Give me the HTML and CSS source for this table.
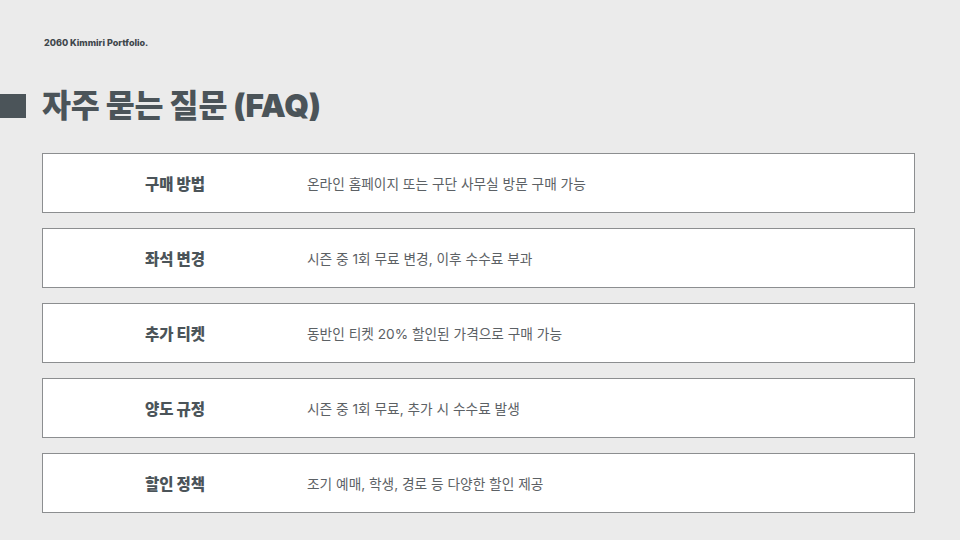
FILE: index.html
```html
<!DOCTYPE html>
<html lang="ko">
<head>
<meta charset="utf-8">
<link rel="stylesheet" href="styles.css">
</head>
<body>
<div class="page">
  <div class="brand">2060 Kimmiri Portfolio.</div>
  <h1 class="title"><span class="mark"></span>자주 묻는 질문 (FAQ)</h1>
  <div class="list">
    <div class="row"><div class="label">구매 방법</div><div class="value">온라인 홈페이지 또는 구단 사무실 방문 구매 가능</div></div>
    <div class="row"><div class="label">좌석 변경</div><div class="value">시즌 중 1회 무료 변경, 이후 수수료 부과</div></div>
    <div class="row"><div class="label">추가 티켓</div><div class="value">동반인 티켓 20% 할인된 가격으로 구매 가능</div></div>
    <div class="row"><div class="label">양도 규정</div><div class="value">시즌 중 1회 무료, 추가 시 수수료 발생</div></div>
    <div class="row"><div class="label">할인 정책</div><div class="value">조기 예매, 학생, 경로 등 다양한 할인 제공</div></div>
  </div>
</div>
</body>
</html>
```

FILE: styles.css
```css
html, body {
  margin: 0;
  padding: 0;
}
body {
  background: #ebebeb;
  font-family: "Inter", "Noto Sans CJK KR", sans-serif;
  color: #4b5459;
}
.page {
  width: 960px;
  height: 540px;
  box-sizing: border-box;
  padding: 37px 45px 0 42px;
}
.brand {
  margin-left: 2px;
  font-size: 9px;
  font-weight: 800;
  color: #3f474c;
  line-height: 12px;
}
.title {
  margin: 38px 0 0 0;
  display: flex;
  align-items: center;
  font-size: 31.5px;
  font-weight: 900;
  line-height: 38px;
  color: #4b5459;
  letter-spacing: -0.15px;
}
.mark {
  width: 26px;
  height: 24px;
  background: #4b5459;
  margin-left: -42px;
  margin-right: 16px;
}
.list {
  margin-top: 28px;
  display: flex;
  flex-direction: column;
  gap: 15px;
}
.row {
  height: 60px;
  box-sizing: border-box;
  border: 1px solid #8c8e90;
  background: #ffffff;
  display: grid;
  grid-template-columns: 264px 1fr;
  align-items: center;
}
.label {
  text-align: center;
  font-size: 15.5px;
  font-weight: 900;
  color: #4b5459;
}
.value {
  font-size: 13.7px;
  color: #5c6165;
}
```
